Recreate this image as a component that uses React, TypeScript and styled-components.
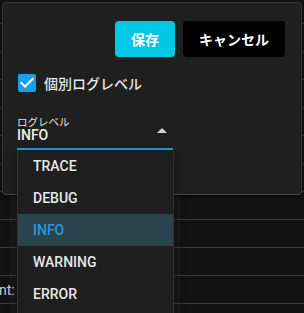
import styled, { createGlobalStyle } from 'styled-components';

const GlobalStyle = createGlobalStyle`
  html, body {
    margin: 0;
    padding: 0;
    background: #121212;
    overflow: hidden;
  }
  body {
    font-family: Roboto, "Noto Sans CJK JP", sans-serif;
    color: #e6e6e6;
  }
`;

const LEVELS = ['TRACE', 'DEBUG', 'INFO', 'WARNING', 'ERROR'];
const ROW_COUNT = 12;

export default function App() {
  const selected = 'INFO';

  return (
    <>
      <GlobalStyle />
      <Screen>
        <Table>
          {Array.from({ length: ROW_COUNT }).map((_, i) => (
            <Row key={i} $first={i === 0}>
              {i === 10 ? 'nt: /' : null}
            </Row>
          ))}
        </Table>

        <MenuGlow />

        <Panel>
          <ButtonRow>
            <ActionButton $variant="save">保存</ActionButton>
            <ActionButton $variant="cancel">キャンセル</ActionButton>
          </ButtonRow>

          <CheckRow>
            <CheckBox viewBox="3 3 18 18">
              <path
                fill="#1a9eea"
                d="M19 3H5c-1.11 0-2 .9-2 2v14c0 1.1.89 2 2 2h14c1.11 0 2-.9 2-2V5c0-1.1-.89-2-2-2z"
              />
              <path fill="#ffffff" d="M10 17l-5-5 1.41-1.41L10 14.17l7.59-7.59L19 8l-9 9z" />
            </CheckBox>
            <CheckLabel>個別ログレベル</CheckLabel>
          </CheckRow>

          <SelectField>
            <FieldLabel>ログレベル</FieldLabel>
            <FieldValue>{selected}</FieldValue>
            <Arrow viewBox="0 0 24 24">
              <path d="M7 14l5-5 5 5z" fill="#d4d4d4" />
            </Arrow>
            <Menu>
              {LEVELS.map((level) => (
                <MenuItem key={level} $selected={level === selected}>
                  {level}
                </MenuItem>
              ))}
            </Menu>
          </SelectField>
        </Panel>
      </Screen>
    </>
  );
}

const Screen = styled.div`
  position: relative;
  width: 304px;
  height: 313px;
  overflow: hidden;
  background: #121212;
`;

const Table = styled.div`
  display: flex;
  flex-direction: column;
`;

const Row = styled.div<{ $first: boolean }>`
  height: ${(p) => (p.$first ? 23 : 27)}px;
  border-bottom: 1px solid #393939;
  display: flex;
  align-items: center;
  font-size: 14px;
  color: #cfcfcf;
  text-indent: -1px;
  white-space: nowrap;
`;

const MenuGlow = styled.div`
  position: absolute;
  left: 10px;
  top: 194px;
  width: 170px;
  bottom: 0;
  background: rgba(255, 255, 255, 0.035);
  z-index: 1;
`;

const Panel = styled.div`
  position: absolute;
  left: 2px;
  top: 2px;
  width: 300px;
  height: 193px;
  box-sizing: border-box;
  background: #1f1f1f;
  border: 1px solid #363636;
  border-bottom-color: #4a4a4a;
  border-radius: 4px;
  box-shadow: 0 2px 3px rgba(0, 0, 0, 0.6);
  padding: 18px 16px 0 14px;
  display: flex;
  flex-direction: column;
`;

const ButtonRow = styled.div`
  display: flex;
  justify-content: flex-end;
  gap: 8px;
`;

const ActionButton = styled.button<{ $variant: 'save' | 'cancel' }>`
  height: 36px;
  padding: 0 16px;
  border: none;
  border-radius: 4px;
  display: flex;
  align-items: center;
  font-family: "Noto Sans CJK JP", Roboto, sans-serif;
  font-size: 14px;
  font-weight: 700;
  color: #ffffff;
  background: ${(p) => (p.$variant === 'save' ? '#00c8e6' : '#000000')};
`;

const CheckRow = styled.div`
  margin-top: 17px;
  height: 18px;
  padding-left: 1px;
  display: flex;
  align-items: center;
  gap: 8px;
`;

const CheckBox = styled.svg`
  width: 18px;
  height: 18px;
  flex: none;
`;

const CheckLabel = styled.span`
  font-family: "Noto Sans CJK JP", sans-serif;
  font-size: 14px;
  font-weight: 500;
  color: #e4e4e4;
  line-height: 18px;
`;

const SelectField = styled.div`
  position: relative;
  margin-top: 24px;
  width: 156px;
  padding-bottom: 4px;
  border-bottom: 2px solid #1a9ce8;
  display: flex;
  flex-direction: column;
`;

const FieldLabel = styled.span`
  font-family: "Noto Sans CJK JP", sans-serif;
  font-size: 10.5px;
  line-height: 11px;
  color: #e0e0e0;
`;

const FieldValue = styled.span`
  font-size: 14px;
  font-weight: 500;
  line-height: 17px;
  color: #f0f0f0;
`;

const Arrow = styled.svg`
  position: absolute;
  right: -1px;
  top: 3px;
  width: 24px;
  height: 24px;
`;

const Menu = styled.ul`
  position: absolute;
  z-index: 2;
  top: calc(100% + 2px);
  left: 0;
  width: 157px;
  box-sizing: border-box;
  margin: 0;
  padding: 0 0 8px;
  list-style: none;
  background: #1e1e1e;
  border-left: 1px solid #303030;
  border-right: 1px solid #303030;
  box-shadow: 0 5px 10px rgba(0, 0, 0, 0.5);
`;

const MenuItem = styled.li<{ $selected: boolean }>`
  height: 32px;
  padding-left: 15px;
  display: flex;
  align-items: center;
  font-size: 14px;
  font-weight: 500;
  color: ${(p) => (p.$selected ? '#1f9be6' : '#e8e8e8')};
  background: ${(p) => (p.$selected ? '#2b434c' : 'transparent')};
`;
